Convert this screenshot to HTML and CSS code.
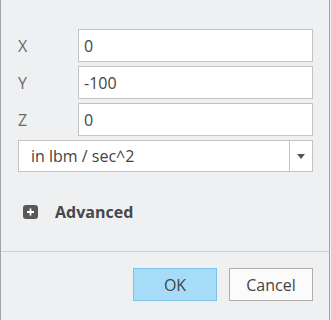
FILE: index.html
```html
<!DOCTYPE html>
<html>
<head lang="en">
    <meta charset="UTF-8">
    <title>Vector</title>
    <link rel="stylesheet" href="styles.css">
</head>
<body>
<div class="g-dlg">
    <div class="g-dlg-body">
        <div class="m-field">
            <label class="m-field-label">X</label>
            <input class="m-field-input" type="text" value="0">
        </div>
        <div class="m-field">
            <label class="m-field-label">Y</label>
            <input class="m-field-input" type="text" value="-100">
        </div>
        <div class="m-field">
            <label class="m-field-label">Z</label>
            <input class="m-field-input" type="text" value="0">
        </div>
        <div class="m-select">
            <span class="m-select-text">in lbm / sec^2</span>
            <span class="m-select-btn"><i class="m-select-arrow"></i></span>
        </div>
        <div class="m-advanced">
            <svg class="m-advanced-icon" width="15" height="14" viewBox="0 0 15 14">
                <rect x="0" y="0" width="15" height="14" rx="3" fill="#585858"/>
                <path d="M7.5 3.5v7M4 7h7" stroke="#fff" stroke-width="1.8"/>
            </svg>
            <span class="m-advanced-text">Advanced</span>
        </div>
    </div>
    <div class="g-dlg-ft">
        <button class="u-btn u-btn-ok">OK</button>
        <button class="u-btn">Cancel</button>
    </div>
</div>
</body>
</html>
```
FILE: styles.css
```css
* {
    margin: 0;
    padding: 0;
    box-sizing: border-box;
}
body {
    background-color: #eff0f2;
    font-family: "Open Sans", "Noto Sans", sans-serif;
    font-size: 16px;
    color: #444;
}
.g-dlg{
    width: 330px;
    height: 320px;
    border-left: 1px solid #a4a4a4;
    border-right: 1px solid #a4a4a4;
    background-color: #eff0f2;
}
.g-dlg-body{
    padding: 29px 16px 0 17px;
}
.m-field{
    display: grid;
    grid-template-columns: 60px 1fr;
    align-items: center;
    height: 33px;
    margin-bottom: 4px;
}
.m-field-label{
    color: #6a6a6a;
    font-size: 16px;
}
.m-field-input{
    height: 33px;
    border: 1px solid #c3c3c3;
    background-color: #fff;
    padding: 0 0 0 5px;
    font-family: inherit;
    font-size: 16px;
    color: #444;
    outline: none;
}
.m-select{
    display: flex;
    height: 32px;
    margin-top: 2px;
    border: 1px solid #c3c3c3;
    background-color: #fff;
}
.m-select-text{
    flex: 1;
    line-height: 30px;
    padding-left: 12px;
    color: #444;
}
.m-select-btn{
    display: flex;
    align-items: center;
    justify-content: center;
    width: 23px;
    border-left: 1px solid #c3c3c3;
}
.m-select-arrow{
    width: 0;
    height: 0;
    border-left: 4px solid transparent;
    border-right: 4px solid transparent;
    border-top: 5px solid #555;
}
.m-advanced{
    display: flex;
    align-items: center;
    height: 20px;
    margin-top: 30px;
    padding-left: 5px;
}
.m-advanced-icon{
    margin-right: 17px;
}
.m-advanced-text{
    font-weight: bold;
    font-size: 16px;
    color: #474747;
}
.g-dlg-ft{
    display: flex;
    justify-content: flex-end;
    gap: 12px;
    margin-top: 29px;
    padding: 16px 16px 0 0;
    border-top: 1px solid #cfd0d3;
}
.u-btn{
    width: 84px;
    height: 33px;
    border: 1px solid #adadad;
    background-color: #fbfbfb;
    font-family: inherit;
    font-size: 16px;
    color: #444;
}
.u-btn-ok{
    border-color: #7cc3ea;
    background-color: #a7dcf8;
}
```
